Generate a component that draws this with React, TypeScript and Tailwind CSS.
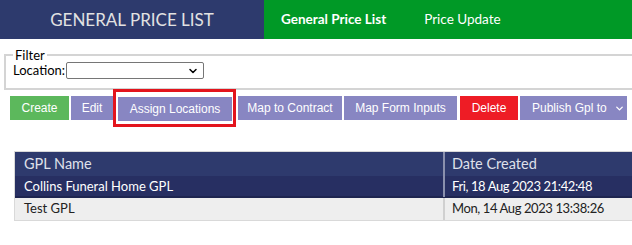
import { ChevronDown } from "lucide-react";

export default function App() {
  const rows = [
    { name: "Collins Funeral Home GPL", date: "Fri, 18 Aug 2023 21:42:48", active: true },
    { name: "Test GPL", date: "Mon, 14 Aug 2023 13:38:26", active: false },
  ];

  const btn = "h-[24px] text-[12px] leading-[24px] text-white whitespace-nowrap text-center";

  return (
    <div className="w-[632px] h-[245px] overflow-hidden bg-white font-['Lato',sans-serif]">
      <div className="w-[720px]">
        {/* top bar */}
        <div className="flex h-[39px]">
          <div className="w-[264px] bg-[#2d3a6d] flex items-center justify-center text-[17px] text-[#e2e2e2]">
            GENERAL PRICE LIST
          </div>
          <div className="flex-1 bg-[#009926] flex items-center pl-[17px] gap-[38px] text-[13.5px] text-white">
            <span className="font-bold">General Price List</span>
            <span>Price Update</span>
          </div>
        </div>

        {/* filter */}
        <fieldset className="ml-[4px] mt-[9px] border-2 border-[#d4d4d4] px-[7px] pb-[7px] text-[13px] text-black">
          <legend className="px-[2px] leading-[14px]">Filter</legend>
          <div className="flex items-center gap-[1px] -mt-[1px]">
            <span>Location:</span>
            <div className="w-[138px] h-[17px] border border-[#767676] rounded-[2px] flex items-center justify-end pr-[4px]">
              <ChevronDown className="w-[12px] h-[12px] text-black" strokeWidth={3} />
            </div>
          </div>
        </fieldset>

        {/* actions */}
        <div className="flex items-center pl-[10px] mt-[6px] font-['Liberation_Sans',Arial,sans-serif]">
          <button className={`${btn} w-[59px] bg-[#5cb85c]`}>Create</button>
          <button className={`${btn} w-[42px] ml-[2px] bg-[#8886c2]`}>Edit</button>
          <div className="relative ml-[5px]">
            <button className={`${btn} w-[114px] bg-[#8886c2]`}>Assign Locations</button>
            <div className="absolute -left-[5px] -right-[4px] -top-[7px] -bottom-[6px] border-[3px] border-[#e3141d] pointer-events-none" />
          </div>
          <button className={`${btn} w-[104px] ml-[6px] bg-[#8886c2]`}>Map to Contract</button>
          <button className={`${btn} w-[113px] ml-[2px] bg-[#8886c2]`}>Map Form Inputs</button>
          <button className={`${btn} w-[58px] ml-[3px] bg-[#ee1c25]`}>Delete</button>
          <button className={`${btn} w-[107px] ml-[2px] bg-[#8886c2] flex items-center gap-[7px] pl-[12px]`}>
            Publish Gpl to
            <ChevronDown className="w-[11px] h-[11px]" strokeWidth={3} />
          </button>
        </div>

        {/* table */}
        <div className="ml-[14px] mt-[30px] border border-[#d9d9d9]">
          <div className="grid grid-cols-[428px_1fr] bg-[#2e3a6d] text-[14.5px] text-[#dfe0ea] h-[24px]">
            <div className="pl-[9px] leading-[24px]">GPL Name</div>
            <div className="pl-[7px] leading-[24px] border-l-2 border-[#8a90ad]">Date Created</div>
          </div>
          {rows.map((r, i) => (
            <div
              key={i}
              className={`grid grid-cols-[428px_1fr] h-[22px] text-[13px] ${
                r.active ? "bg-[#272f62] text-white border-b-2 border-[#1e2550]" : "bg-[#eeeeee] text-[#222]"
              }`}
            >
              <div className="pl-[9px] leading-[21px]">{r.name}</div>
              <div
                className={`pl-[7px] leading-[21px] tracking-[-0.4px] border-l-2 ${
                  r.active ? "border-[#8a90ad]" : "border-[#d0d0d0]"
                }`}
              >
                {r.date}
              </div>
            </div>
          ))}
        </div>
      </div>
    </div>
  );
}
